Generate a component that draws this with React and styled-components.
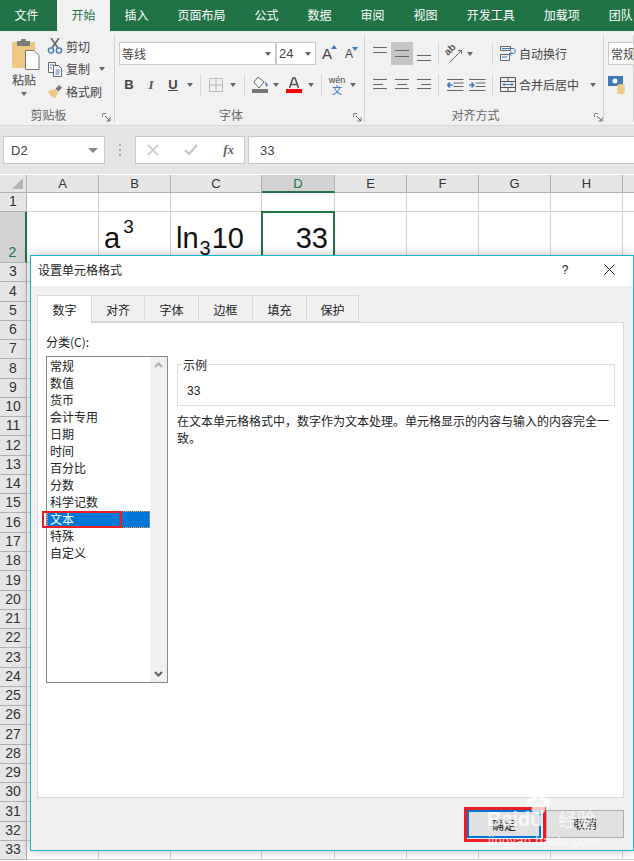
import React from "react";
import styled, { createGlobalStyle } from "styled-components";

const Global = createGlobalStyle`
  html, body { margin: 0; padding: 0; background: #fff; }
  body { width: 634px; height: 861px; overflow: hidden; font-family: "Noto Sans CJK SC", "Liberation Sans", sans-serif; font-size: 12px; color: #222; }
  * { box-sizing: border-box; }
`;

const Page = styled.div`position: relative; width: 634px; height: 861px; overflow: hidden; display: flex; flex-direction: column;`;

/* tabs */
const TabBar = styled.div`height: 31px; background: #217346; display: flex; flex: none; overflow: hidden;`;
const Tab = styled.div`
  flex: none; height: 31px; line-height: 29px; white-space: nowrap; font-size: 12px;
  padding: 0 14.5px; color: ${p => (p.$active ? "#217346" : "#fff")};
  background: ${p => (p.$active ? "#f1f1f1" : "transparent")};
  margin-left: ${p => p.$ml || 0}px;
`;

/* ribbon */
const Ribbon = styled.div`height: 94px; background: #f1f1f1; display: flex; flex: none; overflow: hidden;`;
const Group = styled.div`
  flex: none; width: ${p => p.$w}px; position: relative; display: flex; flex-direction: column; padding-top: 4px;
  &::after { content: ""; position: absolute; right: 0; top: 4px; bottom: 3px; width: 1px; background: #d0d0d0; }
`;
const GroupBody = styled.div`height: 72px; display: flex; flex: none; padding-left: ${p => p.$pl || 0}px;`;
const GroupLabel = styled.div`height: 16px; line-height: 15px; text-align: center; color: #666; font-size: 12px; padding-right: ${p => p.$pr || 0}px;`;
const Launcher = styled.svg`position: absolute; right: ${p => p.$r || 3}px; bottom: 3px; width: 9px; height: 9px;`;
const PasteBtn = styled.div`width: 32px; margin-left: 8px; display: flex; flex-direction: column; align-items: center; padding-top: 4px;
  & > svg { margin-left: 3px; }
`;
const PasteText = styled.div`line-height: 16px; margin-top: 2px; color: #444;`;
const ClipCol = styled.div`margin-left: 7px; display: flex; flex-direction: column;`;
const ClipRow = styled.div`height: 22.5px; display: flex; align-items: center; gap: 3px; color: #444; white-space: nowrap;`;
const ToolCol = styled.div`display: flex; flex-direction: column; gap: 8px; padding-top: 7px;`;
const ToolRow = styled.div`display: flex; align-items: center; height: 23px; margin-left: ${p => p.$ml || 0}px;`;
const Combo = styled.div`
  height: 23px; width: ${p => p.$w}px; background: #fff; border: 1px solid #c8c8c8; display: flex; align-items: center;
  justify-content: space-between; padding: 0 4px 0 2px; color: #444; flex: none;
`;
const ComboNum = styled.span`font-family: "Liberation Sans", sans-serif; font-size: 13px;`;
const IconBtn = styled.div`
  width: ${p => p.$w || 22}px; height: 23px; flex: none; display: flex; align-items: center; justify-content: center;
  background: ${p => (p.$on ? "#c5c5c5" : "transparent")}; color: #444;
`;
const Sep = styled.div`width: 1px; height: 22px; flex: none; background: #d4d4d4; margin: 0 ${p => p.$r ?? 4}px 0 ${p => p.$l ?? 4}px;`;
const Caret = styled.span`
  flex: none; width: 0; height: 0; border-left: 3.5px solid transparent; border-right: 3.5px solid transparent;
  border-top: 4px solid #666; display: inline-block; margin: ${p => p.$m || "0"};
`;
const SizeCaret = styled(Caret)`
  position: absolute; top: 0; right: -5px; border-top-color: #3f78b5;
  transform: ${p => (p.$up ? "rotate(180deg)" : "none")};
`;
const BigCaret = styled(Caret)`border-left-width: 5px; border-right-width: 5px; border-top-width: 5px; border-top-color: #888;`;
const LabelBtn = styled.div`display: flex; align-items: center; height: 23px; gap: 3px; color: #444; white-space: nowrap; flex: none;`;
const B = styled.span`font: bold 13px "Liberation Sans", sans-serif; color: #444;`;
const I = styled.span`font: italic bold 13px "Liberation Serif", serif; color: #555;`;
const U = styled.span`font: bold 13px "Liberation Sans", sans-serif; color: #444; text-decoration: underline;`;
const SizeA = styled.span`font: ${p => p.$size}px "Liberation Sans", sans-serif; color: #444; position: relative;`;
const Wen = styled.div`display: flex; flex-direction: column; align-items: center; font: 9px/10px "Liberation Sans", sans-serif; color: #444;`;
const WenZi = styled.span`color: #2b6cb0; font: 10px/10px "Noto Sans CJK SC", sans-serif;`;

/* formula bar */
const FormulaBar = styled.div`
  height: 49px; background: #e6e6e6; flex: none; display: flex; align-items: flex-start; padding: 10px 0 0 3px;
  border-top: 1px solid #d8d8d8;
`;
const NameBox = styled.div`
  width: 102px; height: 28px; background: #fff; border: 1px solid #c9c9c9; display: flex; align-items: center;
  justify-content: space-between; padding: 0 6px 0 7px; color: #444; font: 13px "Liberation Sans", sans-serif;
`;
const Dots = styled.div`width: 30px; height: 28px; display: flex; align-items: center; justify-content: center;`;
const FxBox = styled.div`
  width: 110px; height: 28px; background: #fff; border: 1px solid #c9c9c9; display: flex; align-items: center; justify-content: space-between; padding: 0 10px 0 11px;
`;
const Fx = styled.span`font: italic bold 13px "Liberation Serif", serif; color: #666;`;
const Input = styled.div`
  margin-left: 3px; flex: 1; height: 28px; background: #fff; border: 1px solid #c9c9c9; border-right: 0; padding-left: 11px;
  display: flex; align-items: center; font: 13px "Liberation Sans", sans-serif; color: #444;
`;

/* sheet */
const Sheet = styled.div`
  flex: 1; display: grid; background: #fff; overflow: hidden; margin-top: 1px;
  grid-template-columns: 27px 72px 72px 91px 73px 72px 72px 72px 72px 20px;
  grid-auto-rows: 19.27px;
  grid-template-rows: 18px 19px 51px;
`;
const Corner = styled.div`background: #e6e6e6; border-right: 1px solid #b1b1b1; border-bottom: 1px solid #b1b1b1; position: relative;
  &::after { content: ""; position: absolute; right: 3px; bottom: 3px; border-left: 11px solid transparent; border-bottom: 11px solid #b5b5b5; }`;
const ColHead = styled.div`
  background: ${p => (p.$sel ? "#d2d2d2" : "#e6e6e6")}; border-right: 1px solid #b1b1b1;
  border-bottom: ${p => (p.$sel ? "2px solid #217346" : "1px solid #b1b1b1")};
  color: ${p => (p.$sel ? "#217346" : "#333")}; text-align: center; font: 13px/18px "Liberation Sans", sans-serif;
`;
const RowHead = styled.div`
  background: ${p => (p.$sel ? "#d2d2d2" : "#e6e6e6")}; border-bottom: 1px solid #b1b1b1;
  border-right: ${p => (p.$sel ? "2px solid #217346" : "1px solid #b1b1b1")};
  color: ${p => (p.$sel ? "#217346" : "#333")}; text-align: center; font: 14px/19px "Liberation Sans", sans-serif;
  display: flex; align-items: flex-end; justify-content: center;
`;
const Cell = styled.div`
  border-right: 1px solid #d4d4d4; border-bottom: 1px solid #d4d4d4; position: relative; overflow: ${p => (p.$sel ? "visible" : "hidden")};
  font: 29px/1 "Liberation Sans", sans-serif; color: #111; white-space: nowrap;
`;
const CellText = styled.div`
  position: absolute; left: ${p => p.$l ?? "auto"}; right: ${p => p.$r ?? "auto"}; top: 11px; line-height: 30px;
`;
const Sup = styled.span`font-size: 19px; vertical-align: 15px; margin-left: 3px; line-height: 0;`;
const Sub = styled.span`font-size: 20px; vertical-align: -7px; line-height: 0; margin: 0 1px;`;
const CellCursor = styled.div`position: absolute; left: -1px; top: -1px; right: -1px; bottom: -1px; border: 2px solid #217346; z-index: 1;`;

/* dialog */
const Dialog = styled.div`
  position: absolute; left: 30px; top: 255px; width: 604px; height: 596px; background: #f0f0f0;
  border: 1px solid #14b8c8; box-shadow: 0 0 10px rgba(0,0,0,.25); display: flex; flex-direction: column; z-index: 5;
`;
const DlgHead = styled.div`height: 30px; flex: none; background: #fff; display: flex; align-items: center; padding: 0 8px 3px 7px; font-size: 12px; color: #222;`;
const DlgTitle = styled.div`flex: 1;`;
const Help = styled.div`width: 20px; text-align: center; font: 12px "Liberation Sans", sans-serif; margin-right: 29px;`;
const CloseIcon = styled.svg`margin-right: 10px;`;
const DlgBody = styled.div`flex: 1; display: flex; flex-direction: column; padding: 9px 9px 0 6px;`;
const DTabs = styled.div`display: flex; height: 27px; flex: none; position: relative; z-index: 1;`;
const DTab = styled.div`
  width: ${p => p.$w}px; text-align: center; color: #222; font-size: 12px; line-height: 28px;
  background: ${p => (p.$active ? "#fff" : "#f0f0f0")}; border: 1px solid #d9d9d9;
  border-left-width: ${p => (p.$first ? 1 : 0)}px;
  border-bottom: ${p => (p.$active ? "0" : "1px solid #d9d9d9")};
  height: ${p => (p.$active ? 28 : 27)}px;
`;
const Panel = styled.div`height: 476px; flex: none; background: #fff; border: 1px solid #d9d9d9; display: flex; padding: 12px 8px 0 8px; width: 587px;`;
const LeftCol = styled.div`width: 122px; flex: none; display: flex; flex-direction: column; position: relative;`;
const CatLabel = styled.div`height: 21px; line-height: 13px; font-size: 12px;`;
const ListBox = styled.div`height: 327px; width: 122px; border: 1px solid #8a8a8a; display: flex;`;
const ListItems = styled.div`flex: 1; padding-top: 1px; min-width: 0;`;
const ListItem = styled.div`
  height: 17px; line-height: 15px; padding-left: 3px; font-size: 12px;
  background: ${p => (p.$sel ? "#0078d7" : "transparent")}; color: ${p => (p.$sel ? "#fff" : "#222")};
  position: relative; ${p => p.$sel && "outline: 1px dotted #f0a040; outline-offset: -1px;"}
`;
const RedBox = styled.div`position: absolute; left: -5px; top: 0; width: 80px; height: 17px; border: 2px solid #ed1c24;`;
const Scroll = styled.div`width: 17px; flex: none; background: #f0f0f0; display: flex; flex-direction: column; justify-content: space-between; align-items: center; padding: 5px 0;`;
const RightCol = styled.div`flex: 1; margin-left: 9px; padding-top: 29px; display: flex; flex-direction: column;`;
const Fieldset = styled.div`height: 42px; border: 1px solid #dcdcdc; position: relative; padding: 19px 0 0 9px; font: 12px "Liberation Sans", sans-serif;`;
const Legend = styled.div`position: absolute; left: 4px; top: -7px; background: #fff; padding: 0 1px; font: 12px/14px "Noto Sans CJK SC", sans-serif; color: #222;`;
const Desc = styled.div`margin-top: 6px; font-size: 12px; line-height: 17px; color: #222;`;
const DlgFoot = styled.div`flex: 1; display: flex; justify-content: flex-end; gap: 5px; padding-top: 12px; position: relative;`;
const DlgBtn = styled.div`
  width: ${p => (p.$primary ? 74 : 78)}px; height: 28px; text-align: center; line-height: 26px; font-size: 12px; background: #e1e1e1; color: #222;
  border: ${p => (p.$primary ? "2px solid #0078d7" : "1px solid #adadad")}; position: relative;
`;
const RedBtnBox = styled.div`position: absolute; left: -5px; top: -5px; width: 82px; height: 35px; border: 3px solid #ed1c24;`;

/* watermark */
const Mark = styled.div`position: absolute; left: 487px; top: 793px; width: 140px; height: 56px; z-index: 8; color: rgba(255,255,255,.75); pointer-events: none;`;
const MarkBai = styled.div`position: absolute; left: 0; top: 13px; font: bold 20px/26px "Liberation Sans", sans-serif;`;
const MarkJing = styled.div`position: absolute; left: 71px; top: 13px; font: 19px/26px "Noto Sans CJK SC", sans-serif;`;
const MarkUrl = styled.div`position: absolute; left: 1px; top: 40px; font: 13px/16px "Liberation Sans", sans-serif; letter-spacing: .3px;`;
const MarkPaw = styled.svg`position: absolute; left: 38px; top: 0; width: 27px; height: 22px;`;

const VAlign = ({ y }) => (
  <svg width="16" height="16" fill="none" stroke="#666">{y.map(v => <path key={v} d={`M1 ${v}.5H15`} />)}</svg>
);
const HAlign = ({ pos }) => {
  const x = pos === "l" ? 1 : pos === "c" ? 3 : 5;
  return (
    <svg width="16" height="16" fill="none" stroke="#666"><path d={`M1 2.5H15M${x} 7.5h10M1 11.5H15`} /></svg>
  );
};

const LauncherIcon = ({ r }) => (
  <Launcher $r={r} viewBox="0 0 9 9"><path d="M.5 4V.5H4" stroke="#888" fill="none" /><path d="M3 3l5 5M8 4.5V8H4.5" stroke="#666" fill="none" /></Launcher>
);

const Paste = () => (
  <svg width="29" height="31" viewBox="0 0 29 31">
    <path d="M2 3h21a1 1 0 0 1 1 1v24a1 1 0 0 1-1 1H2a1 1 0 0 1-1-1V4a1 1 0 0 1 1-1z" fill="#eec881" />
    <rect x="6" y="2" width="13" height="5" fill="#7b7b7b" /><rect x="10" y="0" width="5" height="3" fill="#7b7b7b" />
    <path d="M14.5 11.5H23l5 5V30.5H14.5Z" fill="#fff" stroke="#777" />
  </svg>
);
const Scissors = () => (
  <svg width="16" height="16" viewBox="0 0 16 16" fill="none"><path d="M4 0l7 10M12 0L5 10" stroke="#666" strokeWidth="1.6" /><circle cx="4" cy="12.5" r="2.6" stroke="#3f78b5" strokeWidth="1.4" /><circle cx="12" cy="12.5" r="2.6" stroke="#3f78b5" strokeWidth="1.4" /></svg>
);
const Copy = () => (
  <svg width="16" height="16" viewBox="0 0 16 16" fill="#fff"><path d="M1.5 1.5h7v10h-7z" stroke="#666" /><path d="M6.5 4.5h5l3 3v8h-8z" stroke="#666" /><path d="M3 4h4M3 7h2M8.5 9h4M8.5 11h4M8.5 13h4" stroke="#3f78b5" /></svg>
);
const Brush = () => (
  <svg width="16" height="15" viewBox="0 0 17 16"><path d="M1 8l7-3 4 4-3 6c-3 0-6-3-8-7z" fill="#eec881" /><path d="M9 5l4-4 3 3-4 4z" fill="#777" /></svg>
);
const Borders = () => (
  <svg width="14" height="14" viewBox="0 0 14 14" fill="none" stroke="#888" strokeDasharray="1 1"><rect x=".5" y=".5" width="13" height="13" /><path d="M7 .5v13M.5 7h13" /></svg>
);
const Fill = () => (
  <svg width="18" height="19" viewBox="0 0 18 19"><path d="M7 2l6 5-5 6-5-6z" fill="#fff" stroke="#666" /><path d="M14 6l3 4-2 2z" fill="#3f78b5" /><rect x="1" y="14" width="16" height="4" fill="#777" /></svg>
);
const FontColor = () => (
  <svg width="16" height="19" viewBox="0 0 16 19"><rect y="14" width="16" height="4" fill="#f00" /><path d="M3.5 13L7 3h2l3.5 10M5 9.5h6" stroke="#555" strokeWidth="1.6" fill="none" /></svg>
);
const Orient = () => (
  <svg width="20" height="20" viewBox="0 0 20 20" fill="none"><text x="0" y="0" transform="translate(3 12) rotate(-45)" fontFamily="Liberation Sans" fontSize="10" fontWeight="bold" fill="#555">ab</text><path d="M5 18L16 7M13 6.5h3.5V10" stroke="#666" /></svg>
);
const Indent = ({ right }) => (
  <svg width="17" height="14" viewBox="0 0 17 14" fill="none">
    <path d="M0 1.5h16.5M6.5 5h10M6.5 8.5h10M0 12.5h16.5" stroke="#666" />
    <path d={right ? "M0 7h5M5 7L2.5 4.5M5 7L2.5 9.5" : "M0.5 7h5M.5 7L3 4.5M.5 7L3 9.5"} stroke="#3f78b5" strokeWidth="1.6" />
  </svg>
);
const Wrap = () => (
  <svg width="16" height="15" viewBox="0 0 16 15" fill="none"><path d="M.5.5h10v4h-10zM.5 8.5h9v6h-9z" stroke="#666" /><path d="M2 11h5M2 2.5h11" stroke="#3f78b5" /><path d="M10 2.5h3c3 0 3 5 0 5H9.5M11.5 5.5L9.5 7.5l2 2" stroke="#3f78b5" /></svg>
);
const Merge = () => (
  <svg width="16" height="15" viewBox="0 0 16 15" fill="none"><path d="M.5.5h15v14H.5zM.5 4.5h15M.5 10.5h15M8 .5v4M8 10.5v4" stroke="#555" /><path d="M3 7.5h10M3 7.5l2-2M3 7.5l2 2M13 7.5l-2-2M13 7.5l-2 2" stroke="#3f78b5" /></svg>
);
const Money = () => (
  <svg width="19" height="19" viewBox="0 0 19 19"><rect x="0" y="1" width="15" height="10" fill="#3f78b5" /><circle cx="7" cy="6" r="2.5" fill="#fff" /><ellipse cx="13" cy="11" rx="4" ry="2" fill="#eec881" /><ellipse cx="13" cy="14" rx="4" ry="2" fill="#eec881" /><ellipse cx="13" cy="17" rx="4" ry="2" fill="#eec881" /></svg>
);

const tabs = [["文件"], ["开始", true, 4], ["插入"], ["页面布局"], ["公式"], ["数据"], ["审阅"], ["视图"], ["开发工具"], ["加载项"], ["团队"]];
const cols = ["A", "B", "C", "D", "E", "F", "G", "H", ""];
const rowNums = Array.from({ length: 33 }, (_, i) => i + 1);
const cats = ["常规", "数值", "货币", "会计专用", "日期", "时间", "百分比", "分数", "科学记数", "文本", "特殊", "自定义"];
const dTabs = [["数字", 55], ["对齐", 53], ["字体", 54], ["边框", 54], ["填充", 54], ["保护", 52]];

export default function App() {
  return (
    <Page>
      <Global />
      <TabBar>
        {tabs.map(([t, a, ml]) => <Tab key={t} $active={a} $ml={ml}>{t}</Tab>)}
      </TabBar>
      <Ribbon>
        <Group $w={115}>
          <GroupBody>
            <PasteBtn><Paste /><PasteText>粘贴</PasteText><Caret $m="4px 0 0" /></PasteBtn>
            <ClipCol>
              <ClipRow><Scissors />剪切</ClipRow>
              <ClipRow><Copy />复制<Caret $m="0 0 0 6px" /></ClipRow>
              <ClipRow><Brush />格式刷</ClipRow>
            </ClipCol>
          </GroupBody>
          <GroupLabel $pr={18}>剪贴板</GroupLabel>
          <LauncherIcon r={4} />
        </Group>
        <Group $w={250}>
          <GroupBody $pl={4}>
            <ToolCol>
              <ToolRow>
                <Combo $w={157}>等线<Caret /></Combo>
                <Combo $w={40}><ComboNum>24</ComboNum><Caret /></Combo>
                <IconBtn><SizeA $size={15}>A<SizeCaret $up /></SizeA></IconBtn>
                <IconBtn><SizeA $size={12}>A<SizeCaret /></SizeA></IconBtn>
              </ToolRow>
              <ToolRow $ml={-1}>
                <IconBtn><B>B</B></IconBtn>
                <IconBtn><I>I</I></IconBtn>
                <IconBtn><U>U</U></IconBtn>
                <IconBtn $w={12}><Caret /></IconBtn>
                <Sep />
                <IconBtn><Borders /></IconBtn>
                <IconBtn $w={12}><Caret /></IconBtn>
                <Sep $l={5} $r={5} />
                <IconBtn $w={20}><Fill /></IconBtn>
                <IconBtn $w={12}><Caret /></IconBtn>
                <IconBtn $w={24}><FontColor /></IconBtn>
                <IconBtn $w={10}><Caret /></IconBtn>
                <Sep $l={5} $r={4} />
                <IconBtn><Wen>wén<WenZi>文</WenZi></Wen></IconBtn>
                <IconBtn $w={10}><Caret /></IconBtn>
              </ToolRow>
            </ToolCol>
          </GroupBody>
          <GroupLabel $pr={18}>字体</GroupLabel>
          <LauncherIcon r={3} />
        </Group>
        <Group $w={239}>
          <GroupBody $pl={4}>
            <ToolCol>
              <ToolRow>
                <IconBtn><VAlign y={[1, 6]} /></IconBtn>
                <IconBtn $on><VAlign y={[4, 10]} /></IconBtn>
                <IconBtn><VAlign y={[9, 14]} /></IconBtn>
                <Sep $l={3} $r={5} />
                <IconBtn><Orient /></IconBtn>
                <IconBtn $w={8}><Caret /></IconBtn>
                <Sep $l={18} $r={7} />
                <LabelBtn><Wrap />自动换行</LabelBtn>
              </ToolRow>
              <ToolRow>
                <IconBtn><HAlign pos="l" /></IconBtn>
                <IconBtn><HAlign pos="c" /></IconBtn>
                <IconBtn><HAlign pos="r" /></IconBtn>
                <Sep $l={3} $r={5} />
                <IconBtn><Indent /></IconBtn>
                <IconBtn><Indent right /></IconBtn>
                <Sep $l={4} $r={7} />
                <LabelBtn><Merge />合并后居中<Caret $m="0 0 0 8px" /></LabelBtn>
              </ToolRow>
            </ToolCol>
          </GroupBody>
          <GroupLabel $pr={18}>对齐方式</GroupLabel>
          <LauncherIcon r={1} />
        </Group>
        <Group $w={30}>
          <GroupBody $pl={4}>
            <ToolCol>
              <ToolRow><Combo $w={80}>常规</Combo></ToolRow>
              <ToolRow><Money /></ToolRow>
            </ToolCol>
          </GroupBody>
        </Group>
      </Ribbon>
      <FormulaBar>
        <NameBox>D2<BigCaret /></NameBox>
        <Dots><svg width="3" height="12"><g fill="#aaa"><rect y="0" width="2" height="2" /><rect y="5" width="2" height="2" /><rect y="10" width="2" height="2" /></g></svg></Dots>
        <FxBox>
          <svg width="12" height="12" fill="none" stroke="#c4c4c4" strokeWidth="1.6"><path d="M1 1l10 10M11 1L1 11" /></svg>
          <svg width="14" height="12" fill="none" stroke="#c4c4c4" strokeWidth="2.2"><path d="M1 6l4 4 8-9" /></svg>
          <Fx>fx</Fx>
        </FxBox>
        <Input>33</Input>
      </FormulaBar>
      <Sheet>
        <Corner />
        {cols.map(c => (c ? <ColHead key={c} $sel={c === "D"}>{c}</ColHead> : <ColHead key="z" />))}
        {rowNums.map(r => (
          <React.Fragment key={r}>
            <RowHead $sel={r === 2}>{r}</RowHead>
            {cols.map((c, i) => (
              <Cell key={i} $sel={r === 2 && c === "D"}>
                {r === 2 && c === "B" && <CellText $l="5px">a<Sup>3</Sup></CellText>}
                {r === 2 && c === "C" && <CellText $l="5px">ln<Sub>3</Sub>10</CellText>}
                {r === 2 && c === "D" && <><CellCursor /><CellText $r="6px">33</CellText></>}
              </Cell>
            ))}
          </React.Fragment>
        ))}
      </Sheet>
      <Dialog>
        <DlgHead>
          <DlgTitle>设置单元格格式</DlgTitle>
          <Help>?</Help>
          <CloseIcon width="11" height="11" fill="none" stroke="#222"><path d="M.5.5l10 10M10.5.5l-10 10" /></CloseIcon>
        </DlgHead>
        <DlgBody>
          <DTabs>
            {dTabs.map(([t, w], i) => <DTab key={t} $w={w} $active={i === 0} $first={i === 0}>{t}</DTab>)}
          </DTabs>
          <Panel>
            <LeftCol>
              <CatLabel>分类(C):</CatLabel>
              <ListBox>
                <ListItems>
                  {cats.map(c => (
                    <ListItem key={c} $sel={c === "文本"}>{c}{c === "文本" && <RedBox />}</ListItem>
                  ))}
                </ListItems>
                <Scroll>
                  <svg width="9" height="6" fill="none" stroke="#b0b0b0" strokeWidth="2"><path d="M1 5l3.5-3.5L8 5" /></svg>
                  <svg width="9" height="6" fill="none" stroke="#606060" strokeWidth="2"><path d="M1 1l3.5 3.5L8 1" /></svg>
                </Scroll>
              </ListBox>
            </LeftCol>
            <RightCol>
              <Fieldset><Legend>示例</Legend>33</Fieldset>
              <Desc>在文本单元格格式中，数字作为文本处理。单元格显示的内容与输入的内容完全一致。</Desc>
            </RightCol>
          </Panel>
          <DlgFoot>
            <DlgBtn $primary>确定<RedBtnBox /></DlgBtn>
            <DlgBtn>取消</DlgBtn>
          </DlgFoot>
        </DlgBody>
      </Dialog>
      <Mark>
        <MarkPaw viewBox="0 0 27 22" fill="currentColor"><ellipse cx="5" cy="9" rx="3" ry="4" /><ellipse cx="10" cy="4" rx="3" ry="4" /><ellipse cx="17" cy="4" rx="3" ry="4" /><ellipse cx="22" cy="9" rx="3" ry="4" /><ellipse cx="13.5" cy="16" rx="7" ry="5.5" /></MarkPaw>
        <MarkBai>Baidu</MarkBai>
        <MarkJing>经验</MarkJing>
        <MarkUrl>jingyan.baidu.com</MarkUrl>
      </Mark>
    </Page>
  );
}
